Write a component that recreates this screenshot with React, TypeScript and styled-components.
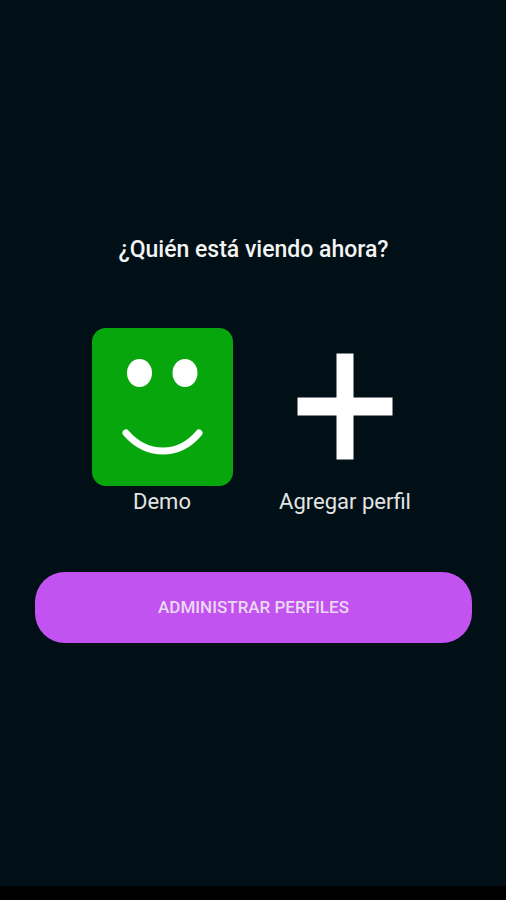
import React from "react";
import styled, { createGlobalStyle } from "styled-components";

const GlobalStyle = createGlobalStyle`
  *, *::before, *::after { box-sizing: border-box; }
  body { margin: 0; background: #001016; }
`;

const Screen = styled.div`
  display: flex;
  flex-direction: column;
  min-height: 100vh;
  background: #001016;
  color: #f4f4f4;
  font-family: Roboto, "Liberation Sans", sans-serif;
`;

const Main = styled.main`
  flex: 1;
  display: flex;
  flex-direction: column;
  align-items: center;
  justify-content: center;
  padding: 0 34px 8px 35px;
`;

const Title = styled.h1`
  margin: 0 0 64px;
  font-size: 23px;
  line-height: 28px;
  font-weight: 500;
  text-align: center;
`;

const ProfileList = styled.ul`
  display: flex;
  flex-wrap: wrap;
  justify-content: center;
  gap: 42px;
  margin: 0 0 54px;
  padding: 0;
  list-style: none;
`;

const ProfileButton = styled.button`
  display: flex;
  flex-direction: column;
  align-items: center;
  width: 141px;
  padding: 0;
  border: 0;
  background: none;
  color: #e4e4e4;
  font-family: inherit;
  font-size: 22px;
  line-height: 32px;
  white-space: nowrap;
  cursor: pointer;
`;

const Tile = styled.span<{ $color?: string }>`
  display: flex;
  width: 100%;
  height: 158px;
  border-radius: 14px;
  background: ${({ $color }) => $color ?? "transparent"};
`;

const Picture = styled.svg`
  width: 100%;
  height: 100%;
`;

const ManageButton = styled.button`
  width: 100%;
  min-height: 71px;
  border: 0;
  border-radius: 30px;
  background: #c353f0;
  color: #ead9f2;
  font-family: inherit;
  font-size: 17px;
  line-height: 24px;
  font-weight: 500;
  text-transform: uppercase;
  cursor: pointer;
`;

const BottomBar = styled.footer`
  height: 14px;
  background: #000;
`;

function Smiley() {
  return (
    <Picture viewBox="0 0 141 158" aria-hidden="true">
      <ellipse cx="47.5" cy="45" rx="12.5" ry="14" fill="#fff" />
      <ellipse cx="93" cy="45" rx="12.5" ry="14" fill="#fff" />
      <path
        d="M34 105C55 129 87 129 107 105"
        fill="none"
        stroke="#fff"
        strokeWidth="7"
        strokeLinecap="round"
      />
    </Picture>
  );
}

function Plus() {
  return (
    <Picture viewBox="0 0 141 158" aria-hidden="true">
      <path d="M61.5 25.5h17v44h39v18h-39v44h-17v-44h-39v-18h39z" fill="#fff" />
    </Picture>
  );
}

export default function App() {
  return (
    <Screen>
      <GlobalStyle />
      <Main>
        <Title>¿Quién está viendo ahora?</Title>
        <ProfileList>
          <li>
            <ProfileButton type="button">
              <Tile $color="#06a60c">
                <Smiley />
              </Tile>
              Demo
            </ProfileButton>
          </li>
          <li>
            <ProfileButton type="button">
              <Tile>
                <Plus />
              </Tile>
              Agregar perfil
            </ProfileButton>
          </li>
        </ProfileList>
        <ManageButton type="button">Administrar perfiles</ManageButton>
      </Main>
      <BottomBar />
    </Screen>
  );
}
